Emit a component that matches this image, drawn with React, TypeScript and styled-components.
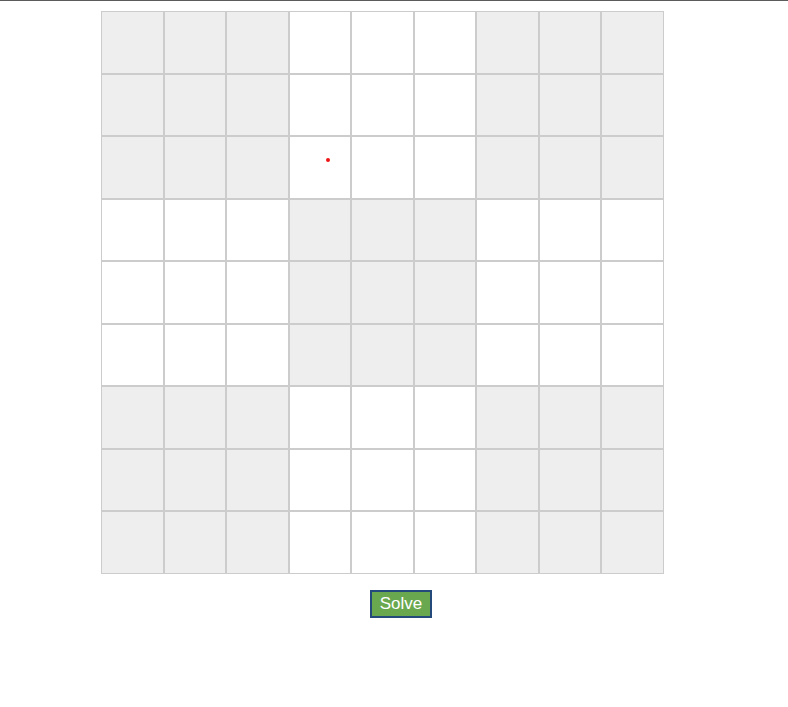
import React from 'react';
import styled, { createGlobalStyle } from 'styled-components';

const GlobalStyle = createGlobalStyle`
  html, body {
    margin: 0;
    padding: 0;
    background: #fff;
    font-family: "Liberation Sans", Arial, sans-serif;
  }
`;

const TopRule = styled.div`
  border-top: 1px solid #5b5b5b;
  height: 0;
`;

const Page = styled.div`
  padding: 10px 0 0 101px;
`;

const Board = styled.div`
  display: grid;
  grid-template-columns: repeat(9, 62.5px);
  grid-auto-rows: 62.5px;
  width: 562.5px;
`;

const Cell = styled.div<{ $shaded: boolean }>`
  position: relative;
  box-sizing: border-box;
  border: 1px solid #cccccc;
  background: ${(p) => (p.$shaded ? '#eeeeee' : '#ffffff')};
`;

const Caret = styled.span`
  position: absolute;
  left: 36px;
  top: 21px;
  width: 4px;
  height: 4px;
  border-radius: 50%;
  background: #f01515;
`;

const Actions = styled.div`
  padding: 16px 0 0 370px;
`;

const SolveButton = styled.button`
  box-sizing: border-box;
  width: 62px;
  height: 28px;
  padding: 0;
  background: #6aa84f;
  border: 2px solid #244a7c;
  color: #ffffff;
  font-family: "Liberation Sans", Arial, sans-serif;
  font-size: 17px;
  line-height: 22px;
  cursor: pointer;
`;

const isShaded = (row: number, col: number) => {
  const box = Math.floor(row / 3) * 3 + Math.floor(col / 3);
  return box % 2 === 0;
};

const App = () => {
  const cells = [];
  for (let r = 0; r < 9; r++) {
    for (let c = 0; c < 9; c++) {
      cells.push(
        <Cell key={`${r}-${c}`} $shaded={isShaded(r, c)}>
          {r === 2 && c === 3 && <Caret />}
        </Cell>
      );
    }
  }

  return (
    <>
      <GlobalStyle />
      <TopRule />
      <Page>
        <Board>{cells}</Board>
      </Page>
      <Actions>
        <SolveButton>Solve</SolveButton>
      </Actions>
    </>
  );
};

export default App;
